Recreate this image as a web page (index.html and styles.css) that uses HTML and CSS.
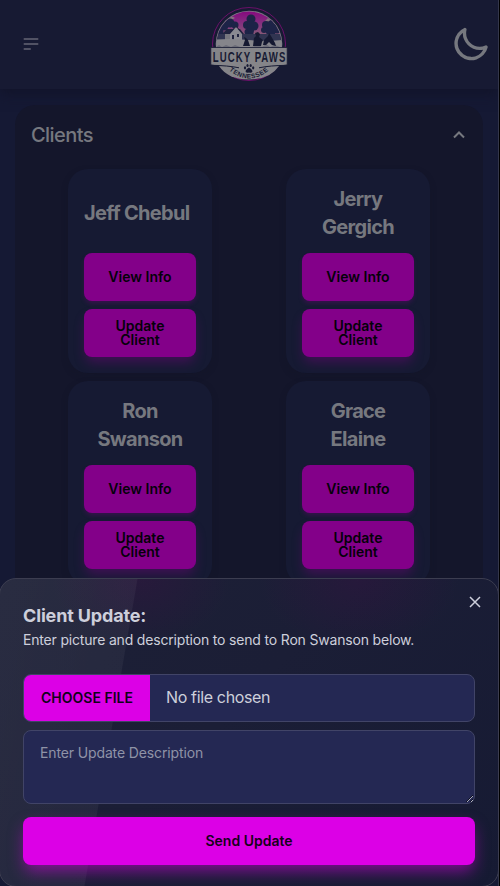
FILE: index.html
```html
<!DOCTYPE html>
<html lang="en">
<head>
<meta charset="utf-8">
<title>Lucky Paws</title>
<link rel="stylesheet" href="styles.css">
</head>
<body>
<div class="app">
  <header class="navbar">
    <svg class="menu" width="20" height="20" viewBox="0 0 24 24" fill="none" stroke="currentColor" stroke-width="2" stroke-linecap="round"><path d="M4 6h16M4 12h16M4 18h7"/></svg>
    <svg class="logo" width="80" height="76" viewBox="0 0 80 76">
      <defs>
        <linearGradient id="sky" x1="0" y1="0" x2="0" y2="1"><stop offset="0" stop-color="#86047f"/><stop offset=".45" stop-color="#84317f"/><stop offset="1" stop-color="#876c72"/></linearGradient>
        <clipPath id="scene"><circle cx="39" cy="37" r="32.5"/></clipPath>
        <path id="arc" d="M14 58.500Q39 84.500 64 58.500"/>
      </defs>
      <circle cx="39" cy="37" r="36.500" fill="#171a33" stroke="#74106f" stroke-width=".9"/>
      <circle cx="39" cy="37" r="33.300" fill="#7e7e86"/>
      <g clip-path="url(#scene)">
        <rect width="80" height="30" y="3" fill="url(#sky)"/>
        <path d="M5 20q5-7 12-9 5-3 8 0l-7 4-8 5zM58 11l9 7 3 6-8-6-7-4z" fill="#85727f"/>
        <g fill="#1d2347">
          <circle cx="14" cy="19" r="4.500"/><circle cx="20" cy="16" r="4.500"/><circle cx="25" cy="18" r="3.500"/><circle cx="10" cy="25" r="3.500"/>
          <circle cx="41" cy="12" r="4.500"/><circle cx="37" cy="18" r="4"/><circle cx="44" cy="19" r="4.500"/><circle cx="38" cy="25" r="3.500"/><path d="M37 15h7v9l-2 9h-3z"/>
          <circle cx="56" cy="18" r="4"/><circle cx="62" cy="18" r="5"/><circle cx="67" cy="23" r="3.500"/><circle cx="54" cy="23" r="3"/><path d="M55 17h11v7l-3 9h-3l-5-9z"/>
        </g>
        <path d="M4 27h70v7H4z" fill="#303451"/>
        <path d="M15 25h17v8H15z" fill="#77777f"/>
        <path d="m12 27 5-5h13l4 5H20z" fill="#20233f"/>
        <path d="m20 27 6-7 6 7v6H20z" fill="#898991"/>
        <path d="m19 27 7-8 7 8" fill="none" stroke="#20233f"/>
        <path d="M22 28h2v5h-2zM27 27h2v3h-2z" fill="#20233f"/>
        <path d="M0 33q20-2 38 0t42-1v12H0z" fill="#85858b"/>
        <path d="M6 40l3-2 3 2 4-2 5 2 4-2 5 2h12l5-2 5 2 4-3 4 3 5-2 5 2v2H6z" fill="#4f5164" opacity=".5"/>
        <path d="M33 39l2-6-1-3 2 1 2 2 2 6zM43 39l1-8 2-2-1-3 3-1 2 2-1 3 4 3-1 2-1 4zM53 38l1-5 4-4 1-3 2 3 4 7 1 3-4-1-3-3-3 3z" fill="#151931"/>
      </g>
      <path d="M.8 40.500h76.400v17.500l-11 1.500H12L.8 58z" fill="#858589" stroke="#171a33" stroke-width=".8"/>
      <path d="M9 59h60q-9 13.500-30 13.500T9 59z" fill="#858589"/>
      <path d="M1 58.300q17 .2 28 2.500M77 58.300q-17 .2-28 2.500" fill="none" stroke="#171a33"/>
      <text class="logo-name" transform="scale(.62 1)" x="4.500" y="55.500" textLength="117">LUCKY PAWS</text>
      <g fill="#171a33"><path d="M39 60.500q2.500 1 3.500 3.500 0 2.500-3.500 1.500-3.500 1-3.500-1.500 1-2.500 3.500-3.500z"/><ellipse cx="35" cy="60.800" rx="1.100" ry="1.600"/><ellipse cx="37.500" cy="58.500" rx="1.100" ry="1.600"/><ellipse cx="40.700" cy="58.500" rx="1.100" ry="1.600"/><ellipse cx="43.200" cy="60.800" rx="1.100" ry="1.600"/></g>
      <text class="logo-state"><textPath href="#arc" startOffset="50%" text-anchor="middle">TENNESSEE</textPath></text>
    </svg>
    <svg class="moon" width="40" height="40" viewBox="0 0 24 24" fill="currentColor"><path d="M21.64,13a1,1,0,0,0-1.05-.14,8.05,8.05,0,0,1-3.37.73A8.15,8.15,0,0,1,9.08,5.49a8.59,8.59,0,0,1,.25-2A1,1,0,0,0,8,2.36,10.14,10.14,0,1,0,22,14.05,1,1,0,0,0,21.64,13Zm-9.5,6.69A8.14,8.14,0,0,1,7.08,5.22v.27A10.15,10.15,0,0,0,17.22,15.63a9.79,9.79,0,0,0,2.1-.22A8.11,8.11,0,0,1,12.14,19.73Z"/></svg>
  </header>
  <main class="panel">
    <div class="panel-head"><h1>Clients</h1>
      <svg width="12" height="8" viewBox="0 0 12 8" fill="none" stroke="currentColor" stroke-width="2"><path d="m1 6.500 5-5 5 5"/></svg>
    </div>
    <div class="clients">
      <article class="client"><h2 class="single-line">Jeff Chebul</h2><button>View Info</button><button>Update Client</button></article>
      <article class="client"><h2>Jerry Gergich</h2><button>View Info</button><button>Update Client</button></article>
      <article class="client"><h2>Ron Swanson</h2><button>View Info</button><button>Update Client</button></article>
      <article class="client"><h2>Grace Elaine</h2><button>View Info</button><button>Update Client</button></article>
    </div>
  </main>
</div>
<section class="modal">
  <svg class="close" width="12" height="12" viewBox="0 0 12 12" fill="none" stroke="currentColor" stroke-width="1.500"><path d="m1 1 10 10M11 1 1 11"/></svg>
  <h3>Client Update:</h3>
  <p>Enter picture and description to send to Ron Swanson below.</p>
  <div class="file"><span class="choose">CHOOSE FILE</span><span class="chosen">No file chosen</span></div>
  <textarea placeholder="Enter Update Description"></textarea>
  <button class="send">Send Update</button>
</section>
</body>
</html>
```
FILE: styles.css
```css
* { box-sizing: border-box; }
body {
  margin: 0;
  height: 886px;
  overflow: hidden;
  background: #000;
  font-family: Inter, "Liberation Sans", sans-serif;
}
h1, h2, h3, p { margin: 0; }
button { border: 0; font: 600 14px/14px Inter, sans-serif; letter-spacing: 0; }

.app {
  width: 499px;
  height: 886px;
  overflow: hidden;
  background: #151934;
  border-right: 1px solid #34374b;
  color: #76787f;
}
.navbar {
  display: flex;
  align-items: center;
  height: 89px;
  padding: 0 7px 1px 21px;
  background: #171a33;
  box-shadow: 0 5px 12px #12142a;
}
.menu { color: #666675; }
.logo { margin: 2px 0 0 169px; }
.moon { margin-left: auto; }
.logo-name { font: 700 15.5px "Liberation Sans", sans-serif; fill: #171a33; }
.logo-state { font: 700 6.5px "Liberation Sans", sans-serif; letter-spacing: .5px; fill: #171a33; }

.panel {
  width: 468px;
  height: 820px;
  margin: 16px 0 0 15px;
  padding: 0 16px;
  border-radius: 20px;
  background: #14162b;
}
.panel-head {
  display: flex;
  align-items: center;
  justify-content: space-between;
  height: 64px;
  padding: 0 2px 4px 0;
}
.panel-head h1 { font-size: 20px; font-weight: 500; letter-spacing: -.55px; }
.clients {
  display: grid;
  grid-template-columns: 1fr 1fr;
  justify-items: center;
  row-gap: 8px;
}
.client {
  display: flex;
  flex-direction: column;
  gap: 8px;
  width: 144px;
  height: 204px;
  padding: 16px;
  border-radius: 20px;
  background: #161a33;
  box-shadow: 0 3px 6px #12142960;
}
.client h2 {
  display: flex;
  align-items: center;
  justify-content: center;
  height: 56px;
  margin-bottom: 4px;
  font-size: 20px;
  line-height: 28px;
  font-weight: 700;
  letter-spacing: -.7px;
  text-align: center;
}
.client .single-line { justify-content: flex-start; }
.client button {
  height: 48px;
  padding: 0 16px;
  border-radius: 8px;
  background: #830089;
  color: #05000a;
  box-shadow: 0 3px 5px -1px #83008955;
}
.client button:last-child { box-shadow: 0 7px 12px -2px #83008966; }

.modal {
  position: absolute;
  top: 578px;
  left: -1px;
  width: 500px;
  height: 309px;
  padding: 24px 23px;
  border: 1px solid #3c3d50;
  border-radius: 17px;
  background:
    linear-gradient(99.8deg, #ffffff0e 0, #ffffff0b 135px, transparent 136px),
    radial-gradient(ellipse 90px 65px at 141px 0, #48084b40, transparent),
    radial-gradient(ellipse 100px 70px at 359px 0, #48084b40, transparent),
    linear-gradient(135deg, #1d2036, #1b1e36 45%, #161a33);
  color: #cdcfdb;
}
.close { position: absolute; top: 17px; right: 17px; }
.modal h3 { height: 27px; font-size: 18px; line-height: 25px; font-weight: 700; letter-spacing: -.15px; }
.modal p { height: 44px; font-size: 14px; line-height: 20px; letter-spacing: -.18px; white-space: nowrap; }
.file {
  display: flex;
  height: 48px;
  overflow: hidden;
  border: 1px solid #414467;
  border-radius: 8px;
  background: #242853;
}
.choose {
  width: 126px;
  background: #dc00e6;
  color: #11001a;
  font-size: 14px;
  line-height: 46px;
  font-weight: 600;
  text-align: center;
}
.chosen { padding-left: 16px; font-size: 16px; line-height: 45px; letter-spacing: -.35px; }
textarea {
  display: block;
  width: 100%;
  height: 74px;
  margin: 8px 0 13px;
  padding: 12px 16px;
  border: 1px solid #414467;
  border-radius: 8px;
  background: #242853;
  font: 14px/20px Inter, sans-serif;
  letter-spacing: -.13px;
}
textarea::placeholder { color: #8f93a7; }
.send {
  width: 100%;
  height: 48px;
  border-radius: 8px;
  background: #dc00e6;
  color: #16001a;
  box-shadow: 0 8px 16px -2px #dc00e688;
}
```
